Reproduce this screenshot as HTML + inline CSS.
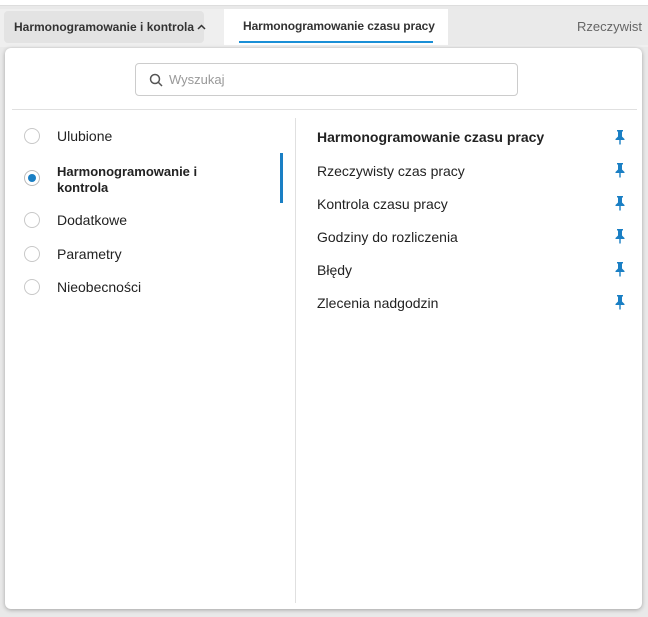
<!DOCTYPE html>
<html><head><meta charset="utf-8"><style>
body{margin:0;width:648px;height:617px;overflow:hidden;background:#e9e9e9;font-family:"Liberation Sans",sans-serif;position:relative}
.top{position:absolute;left:0;top:0;width:648px;height:5px;background:#fff;border-bottom:1px solid #ddd}
.bar{position:absolute;left:0;top:9px;width:648px;height:38px;background:#efefef}
.crumb{position:absolute;left:4px;top:11px;width:200px;height:32px;background:#e3e3e3;border-radius:4px;font-size:12px;font-weight:bold;color:#333;line-height:32px;padding-left:10px;box-sizing:border-box;white-space:nowrap}
.slash{position:absolute;left:262px;top:17px;width:1px;height:20px;background:#d4d4d4;transform:skewX(-15deg)}
.tab{position:absolute;left:224px;top:9px;width:224px;height:36px;background:#fff}
.tabt{position:absolute;left:243px;top:19px;font-size:12px;font-weight:bold;color:#333;white-space:nowrap;letter-spacing:-0.1px}
.tabu{position:absolute;left:239px;top:41px;width:194px;height:2px;background:#1a8fd6}
.tab2{position:absolute;left:448px;top:9px;width:200px;height:36px;background:#eaeaea}
.tab2t{position:absolute;left:577px;top:19px;font-size:13px;color:#666;white-space:nowrap}
.panel{position:absolute;left:5px;top:48px;width:637px;height:561px;background:#fff;border-radius:6px;box-shadow:0 1px 4px rgba(0,0,0,.3)}
.search{position:absolute;left:135px;top:63px;width:383px;height:33px;border:1px solid #ccc;border-radius:4px;box-sizing:border-box}
.search span{position:absolute;left:33px;top:8px;font-size:13px;color:#999}
.hr{position:absolute;left:12px;top:109px;width:625px;height:1px;background:#e0e0e0}
.vr{position:absolute;left:295px;top:118px;width:1px;height:485px;background:#e0e0e0}
.bl{position:absolute;left:280px;top:153px;width:3px;height:50px;background:#1a7fc4}
.r{position:absolute;left:24px;width:16px;height:16px;border:1px solid #c8c8c8;border-radius:50%;box-sizing:border-box}
.l{position:absolute;left:57px;font-size:14px;color:#222;white-space:nowrap}
.i{position:absolute;left:317px;font-size:14px;color:#222;white-space:nowrap}
.p{position:absolute;left:614px}
</style></head><body>
<div class="top"></div>
<div class="bar"></div>
<div class="crumb">Harmonogramowanie i kontrola <svg width="9" height="6" viewBox="0 0 9 6" style="vertical-align:1px"><path d="M1 5L4.5 1.5L8 5" fill="none" stroke="#333" stroke-width="1.5"/></svg></div>
<div class="slash"></div>
<div class="tab"></div><div class="tabt">Harmonogramowanie czasu pracy</div><div class="tabu"></div>
<div class="tab2"></div><div class="tab2t">Rzeczywist</div>
<div class="panel"></div>
<div class="search"><svg style="position:absolute;left:13px;top:9px" width="14" height="14" viewBox="0 0 14 14"><circle cx="6" cy="6" r="4.5" fill="none" stroke="#555" stroke-width="1.5"/><path d="M9.5 9.5L13 13" stroke="#555" stroke-width="1.5"/></svg><span>Wyszukaj</span></div>
<div class="hr"></div><div class="vr"></div><div class="bl"></div>
<div class="r" style="top:128px"></div><div class="l" style="top:128px">Ulubione</div>
<div class="r" style="top:170px;border-color:#bbb"><div style="position:absolute;left:3px;top:3px;width:8px;height:8px;border-radius:50%;background:#1a7fc4"></div></div>
<div class="l" style="top:164px;font-size:13px;font-weight:bold;line-height:16px">Harmonogramowanie i<br>kontrola</div>
<div class="r" style="top:212px"></div><div class="l" style="top:212px">Dodatkowe</div>
<div class="r" style="top:246px"></div><div class="l" style="top:246px">Parametry</div>
<div class="r" style="top:279px"></div><div class="l" style="top:279px">Nieobecności</div>
<div class="i" style="top:129px;font-weight:bold;font-size:14px">Harmonogramowanie czasu pracy</div>
<div class="i" style="top:163px">Rzeczywisty czas pracy</div>
<div class="i" style="top:196px">Kontrola czasu pracy</div>
<div class="i" style="top:229px">Godziny do rozliczenia</div>
<div class="i" style="top:262px">Błędy</div>
<div class="i" style="top:295px">Zlecenia nadgodzin</div>
<svg class="p" style="top:129px" width="12" height="16" viewBox="0 0 12 16"><path d="M3 1h6v1.5H8v5l2.5 2.5v1H6.7V15.5H5.3V11H1.5v-1L4 7.5v-5H3z" fill="#1a7fc4"/></svg>
<svg class="p" style="top:162px" width="12" height="16" viewBox="0 0 12 16"><path d="M3 1h6v1.5H8v5l2.5 2.5v1H6.7V15.5H5.3V11H1.5v-1L4 7.5v-5H3z" fill="#1a7fc4"/></svg>
<svg class="p" style="top:195px" width="12" height="16" viewBox="0 0 12 16"><path d="M3 1h6v1.5H8v5l2.5 2.5v1H6.7V15.5H5.3V11H1.5v-1L4 7.5v-5H3z" fill="#1a7fc4"/></svg>
<svg class="p" style="top:228px" width="12" height="16" viewBox="0 0 12 16"><path d="M3 1h6v1.5H8v5l2.5 2.5v1H6.7V15.5H5.3V11H1.5v-1L4 7.5v-5H3z" fill="#1a7fc4"/></svg>
<svg class="p" style="top:261px" width="12" height="16" viewBox="0 0 12 16"><path d="M3 1h6v1.5H8v5l2.5 2.5v1H6.7V15.5H5.3V11H1.5v-1L4 7.5v-5H3z" fill="#1a7fc4"/></svg>
<svg class="p" style="top:294px" width="12" height="16" viewBox="0 0 12 16"><path d="M3 1h6v1.5H8v5l2.5 2.5v1H6.7V15.5H5.3V11H1.5v-1L4 7.5v-5H3z" fill="#1a7fc4"/></svg>
</body></html>
